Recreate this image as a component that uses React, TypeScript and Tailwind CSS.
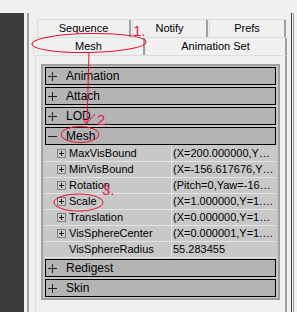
import React from 'react'

const groups = ['Animation', 'Attach', 'LOD']

const props = [
  { name: 'MaxVisBound', value: '(X=200.000000,Y=200.000000,Z=200.000000)', box: true },
  { name: 'MinVisBound', value: '(X=-156.617676,Y=-200.000000,Z=-200.000000)', box: true },
  { name: 'Rotation', value: '(Pitch=0,Yaw=-16384,Roll=0)', box: true },
  { name: 'Scale', value: '(X=1.000000,Y=1.000000,Z=1.000000)', box: true },
  { name: 'Translation', value: '(X=0.000000,Y=15.000000,Z=0.000000)', box: true },
  { name: 'VisSphereCenter', value: '(X=0.000001,Y=1.000000,Z=0.000000)', box: true },
  { name: 'VisSphereRadius', value: '55.283455', box: false },
]

function Plus() {
  return (
    <svg width="9" height="9" viewBox="0 0 9 9" className="shrink-0">
      <path d="M0 4.5H9M4.5 0V9" stroke="#202020" strokeWidth="1" />
    </svg>
  )
}

function Minus() {
  return (
    <svg width="9" height="9" viewBox="0 0 9 9" className="shrink-0">
      <path d="M0 4.5H9" stroke="#202020" strokeWidth="1" />
    </svg>
  )
}

function GroupRow({ label, open = false }: { label: string; open?: boolean }) {
  return (
    <div className="h-[18px] border border-black bg-[#b4b4b4] flex items-center pl-[2px] gap-[9px] text-[12px] text-black">
      {open ? <Minus /> : <Plus />}
      <span className="leading-none">{label}</span>
    </div>
  )
}

function BoxPlus() {
  return (
    <div className="w-[9px] h-[9px] border border-[#808080] flex items-center justify-center shrink-0">
      <svg width="7" height="7" viewBox="0 0 7 7">
        <path d="M1 3.5H6M3.5 1V6" stroke="#202020" strokeWidth="1" />
      </svg>
    </div>
  )
}

export default function App() {
  return (
    <div className="relative w-[297px] h-[312px] overflow-hidden bg-[#f0f0f0] flex font-['Liberation_Sans',Arial,sans-serif] text-[11px] text-black">
      {/* dark side strip */}
      <div className="w-[24px] flex flex-col shrink-0">
        <div className="h-[13px]" />
        <div className="flex-1 bg-[#3c3c3c]" />
      </div>
      <div className="w-[3px] shrink-0" />
      <div className="w-[2px] mt-[13px] bg-[#a0a0a0] shrink-0" />

      {/* main */}
      <div className="w-[262px] shrink-0 flex flex-col pt-[19px]">
        <div className="flex ml-[8px] gap-[1px] h-[18px]">
          <div className="w-[94px] border-t border-l border-[#dcdcdc] border-r-2 border-r-[#a0a0a0] rounded-t-[2px] flex items-center justify-center">Sequence</div>
          <div className="w-[76px] border-t border-l border-[#dcdcdc] border-r-2 border-r-[#a0a0a0] rounded-t-[2px] flex items-center justify-center">Notify</div>
          <div className="w-[77px] border-t border-l border-[#dcdcdc] border-r-2 border-r-[#a0a0a0] rounded-t-[2px] flex items-center justify-center">Prefs</div>
        </div>
        <div className="flex ml-[4px] h-[18px]">
          <div className="w-[112px] border-t border-l border-[#dcdcdc] border-r-2 border-r-[#a0a0a0] rounded-t-[2px] flex items-center justify-center">Mesh</div>
          <div className="w-[142px] border-t border-l border-[#dcdcdc] border-r-2 border-r-[#a0a0a0] rounded-t-[2px] flex items-center justify-center">Animation Set</div>
        </div>

        {/* panel */}
        <div className="ml-[6px] w-[252px] flex-1 border-l border-t border-[#dcdcdc] border-r-2 border-r-[#a0a0a0] pt-[8px] pl-[5px]">
          <div className="w-[239px] border-2 border-[#a0a0a0] bg-[#c8c8c8] px-[2px] py-[1px] flex flex-col">
            {groups.map((g) => (
              <div key={g} className="mb-[2px]">
                <GroupRow label={g} />
              </div>
            ))}
            <GroupRow label="Mesh" open />
            <div className="mt-[1px] flex flex-col bg-[#c8c8c8]">
              {props.map((p) => (
                <div key={p.name} className="h-[16px] flex border-b border-[#e4e4e4]">
                  <div className="w-[127px] shrink-0 border-r border-[#e4e4e4] flex items-center pl-[12px] gap-[3px]">
                    {p.box ? <BoxPlus /> : <div className="w-[9px]" />}
                    <span className="whitespace-nowrap leading-none">{p.name}</span>
                  </div>
                  <div className="flex-1 min-w-0 flex items-center pl-[1px]">
                    <span className="truncate leading-none">{p.value}</span>
                  </div>
                </div>
              ))}
            </div>
            <div className="mt-[1px] mb-[2px]">
              <GroupRow label="Redigest" />
            </div>
            <GroupRow label="Skin" />
          </div>
        </div>
      </div>

      {/* right edge */}
      <div className="w-[1px] mt-[13px] bg-[#404040] shrink-0" />
      <div className="w-[1px] shrink-0" />
      <div className="w-[1px] mt-[13px] bg-[#a0a0a0] shrink-0" />

      {/* red annotations */}
      <svg className="absolute inset-0 pointer-events-none" width="297" height="312" viewBox="0 0 297 312">
        <g fill="none" stroke="#e8102a" strokeWidth="1">
          <ellipse cx="89" cy="43" rx="57" ry="9.5" transform="rotate(-1 89 43)" />
          <path d="M89 52 L87 124" />
          <path d="M83 118 L86 124 L95 114" />
          <ellipse cx="80" cy="134.5" rx="19" ry="8" />
          <ellipse cx="78.5" cy="202.5" rx="24.5" ry="8.5" />
        </g>
        <g fill="#e8174b" fontFamily="'Liberation Sans', Arial, sans-serif" fontSize="15">
          <text x="133" y="36">1.</text>
          <text x="97" y="125">2.</text>
          <text x="102" y="195">3.</text>
        </g>
      </svg>
    </div>
  )
}
